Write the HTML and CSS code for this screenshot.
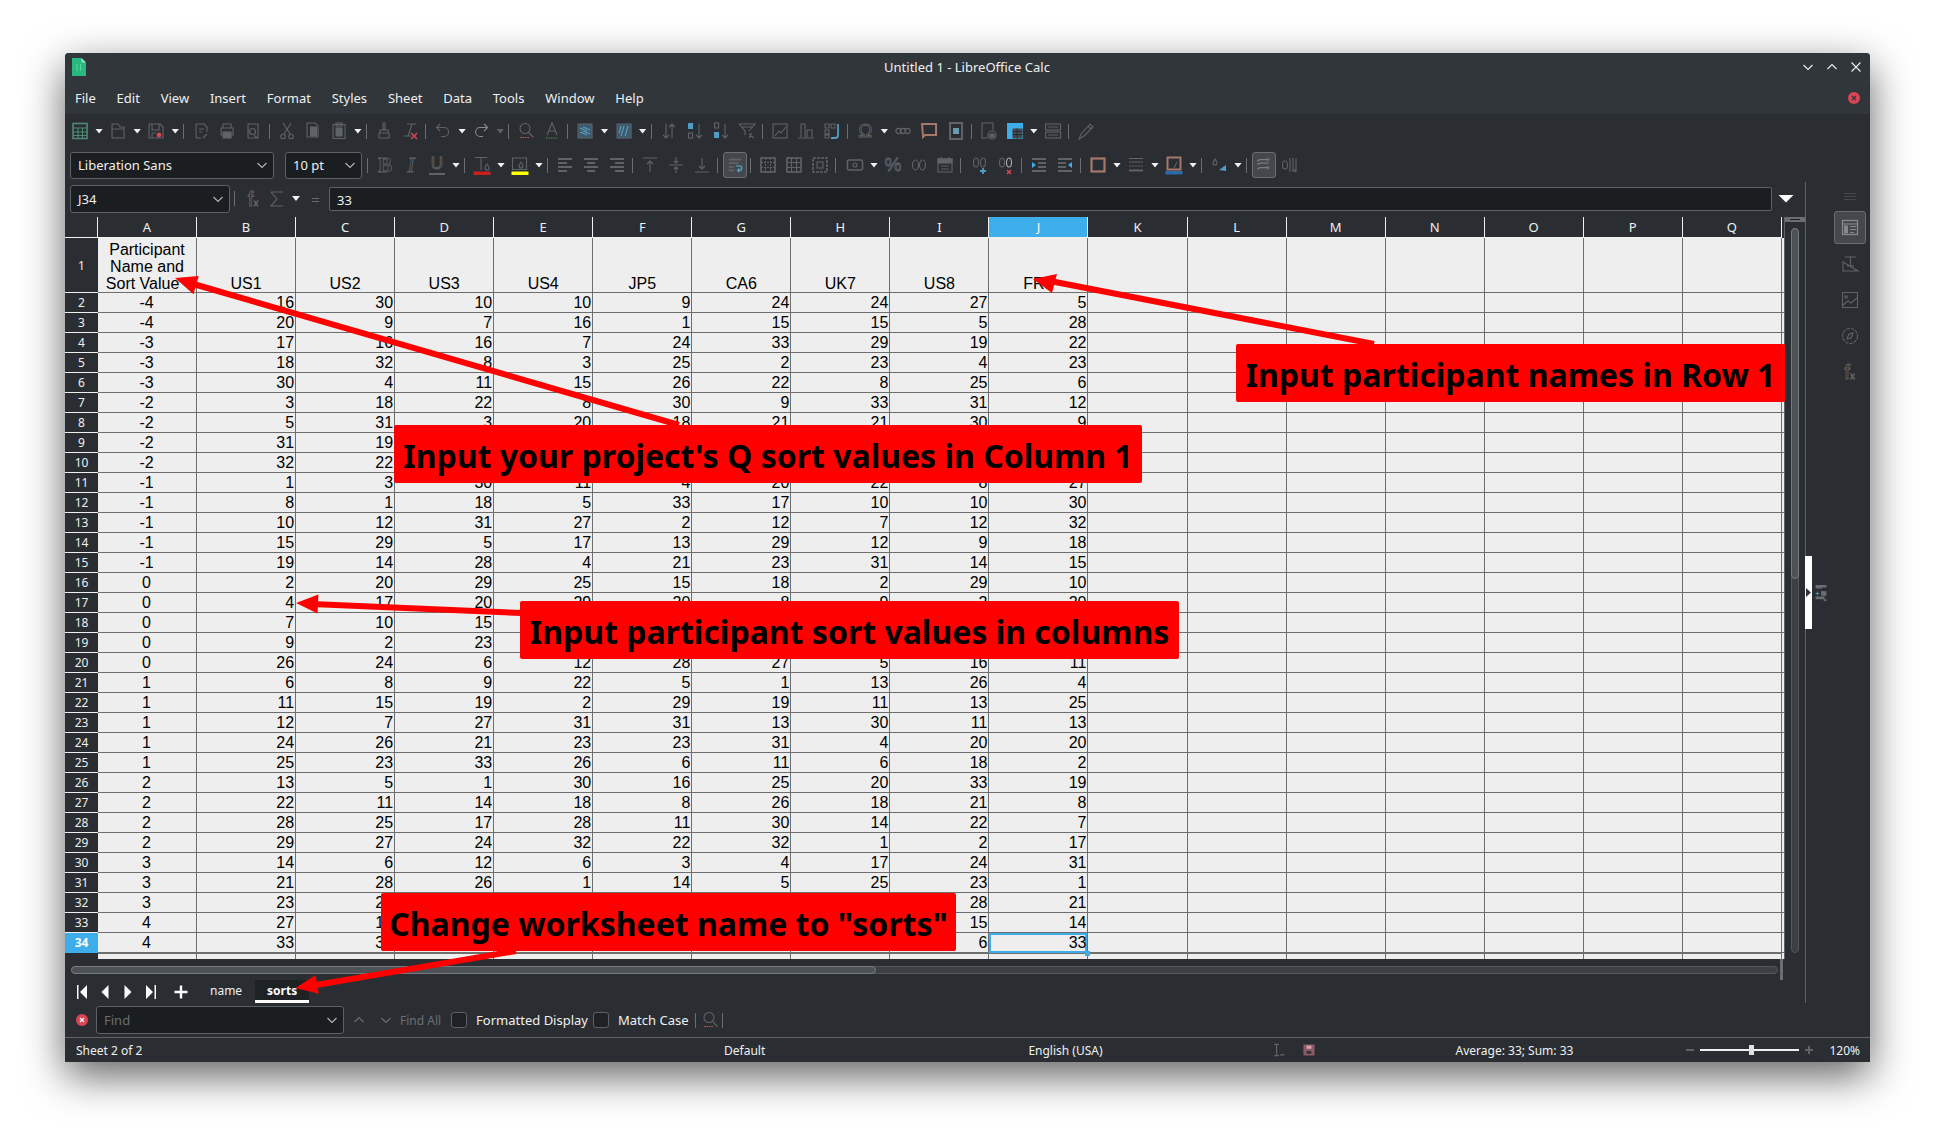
FILE: index.html
```html
<!DOCTYPE html>
<html lang="en">
<head>
  <meta charset="UTF-8">
  <title>Untitled 1 - LibreOffice Calc</title>
  <link rel="stylesheet" href="styles.css">
</head>
<body>
  <svg class="defs" aria-hidden="true">
    <symbol id="calc" viewBox="0 0 20 20"><rect x="3" y="2.500" width="14" height="15" stroke="#4d8a74" stroke-width="1.600"/><path d="M3 7h14M3 11h14M3 14.500h14M8 7v10M12.500 7v10" stroke="#4d8a74"/></symbol>
    <symbol id="open" viewBox="0 0 20 20"><path d="M4 17V3h6l2 3h4v11zM4 8h12"/></symbol>
    <symbol id="save" viewBox="0 0 20 20"><path d="M3 3h11l3 3v11H3zM6 3v6h7V3M6 17v-5h4"/><circle cx="13" cy="14" r="2.400" fill="#da4453" stroke="none"/></symbol>
    <symbol id="doc" viewBox="0 0 20 20"><path d="M5 17V3h8l3 3v5M5 17h5M12 17l4-4M8 8h5M8 11h3"/></symbol>
    <symbol id="print" viewBox="0 0 20 20"><path d="M6 7V3h8v4M4 7h12v7H4z"/><rect x="6" y="11" width="8" height="6" fill="#5f6367"/></symbol>
    <symbol id="preview" viewBox="0 0 20 20"><path d="M5 17V3h10v14zM11 14l3 3"/><circle cx="9.500" cy="10.500" r="3"/></symbol>
    <symbol id="cut" viewBox="0 0 20 20"><path d="M6 2l7 11M14 2l-7 11"/><circle cx="6" cy="15.500" r="2.300"/><circle cx="14" cy="15.500" r="2.300"/></symbol>
    <symbol id="copy" viewBox="0 0 20 20"><path d="M4 16V2h8l3 3v11z"/><rect x="7.500" y="6" width="6" height="9" fill="#5f6367"/></symbol>
    <symbol id="paste" viewBox="0 0 20 20"><rect x="4" y="3.500" width="12" height="14"/><rect x="7" y="2" width="6" height="3"/><rect x="7" y="7" width="6" height="8" fill="#5f6367"/></symbol>
    <symbol id="brush" viewBox="0 0 20 20"><path d="M9 2h2v6H9zM6 9h8v3H6zM5 12h10v5H5z"/></symbol>
    <symbol id="clear" viewBox="0 0 20 20"><path d="M7 3h9M12 3L8 15M4 15h7"/><path d="M11 12l6 6M17 12l-6 6" stroke="#da4453" stroke-width="1.500"/></symbol>
    <symbol id="undo" viewBox="0 0 20 20"><path d="M7 3L3.500 6.500 7 10M4 6.500h7a4.500 4.500 0 0 1 0 9H8"/></symbol>
    <symbol id="redo" viewBox="0 0 20 20"><path d="M13 3l3.500 3.500L13 10M16 6.500H9a4.500 4.500 0 0 0 0 9h3" stroke="#85898d"/></symbol>
    <symbol id="find" viewBox="0 0 20 20"><circle cx="9" cy="7.500" r="5"/><path d="M12.500 11.500l5 5"/><path d="M4 16.500h9" stroke="#b5654e" stroke-dasharray="1.500 1"/></symbol>
    <symbol id="spell" viewBox="0 0 20 20"><path d="M5 14L10 2l5 12M7 10h6"/><path d="M4 17h12" stroke="#4d8a5c" stroke-dasharray="1.500 1"/></symbol>
    <symbol id="rowfill" viewBox="0 0 20 20"><rect x="3" y="3" width="14" height="14" fill="#3a5a6e"/><path d="M5 7l7 3M8 6l7 3M5 11l7 3M8 10l7 3" stroke="#5f9dbd"/></symbol>
    <symbol id="colfill" viewBox="0 0 20 20"><rect x="3" y="3" width="14" height="14" fill="#3a5a6e"/><path d="M7 15l3-10M11 15l3-10M5 12l2-7" stroke="#5f9dbd"/></symbol>
    <symbol id="sort" viewBox="0 0 20 20"><path d="M7 3v14M4 14l3 3 3-3M13 17V3M10 6l3-3 3 3"/></symbol>
    <symbol id="asc" viewBox="0 0 20 20"><rect x="3" y="2" width="5" height="6" fill="#4f9cc4" stroke="none"/><rect x="3.500" y="12" width="4" height="5"/><path d="M14 3v14M11 14l3 3 3-3"/></symbol>
    <symbol id="desc" viewBox="0 0 20 20"><rect x="3.500" y="2" width="4" height="5"/><rect x="3" y="11" width="5" height="6" fill="#4f9cc4" stroke="none"/><path d="M14 3v14M11 14l3 3 3-3"/></symbol>
    <symbol id="filter" viewBox="0 0 20 20"><path d="M2 3h16l-6 7M2 3l6 7v4M4 6h12M12 13l5 4M15 12l-3 5"/></symbol>
    <symbol id="chart" viewBox="0 0 20 20"><rect x="3" y="3" width="14" height="14"/><path d="M5 15l4-5 2 2 5-6"/></symbol>
    <symbol id="bars" viewBox="0 0 20 20"><path d="M5 16V3h4v13M11 16V9h5v7M2 17h16"/></symbol>
    <symbol id="cross" viewBox="0 0 20 20"><path d="M3 3h4v4H3zM9 3h4v4H9zM3 9h4v4H3zM3 14h4v3H3z"/><path d="M16 3v11a3 3 0 0 1-3 3h-4" stroke="#4f9cc4" stroke-width="1.800"/></symbol>
    <symbol id="link" viewBox="0 0 20 20"><circle cx="5.500" cy="10" r="2.600"/><circle cx="10" cy="10" r="2.600"/><circle cx="14.500" cy="10" r="2.600"/></symbol>
    <symbol id="comment" viewBox="0 0 20 20"><path d="M3 3h14v11H6l-2 2z" stroke="#a6776a" stroke-width="2"/></symbol>
    <symbol id="header" viewBox="0 0 20 20"><rect x="4" y="2" width="12" height="16" stroke-width="2"/><rect x="7" y="7" width="6" height="6" fill="#6b9ab5" stroke="none"/></symbol>
    <symbol id="form" viewBox="0 0 20 20"><path d="M9 17H3V2h11v7"/><circle cx="13" cy="14" r="4"/><rect x="11" y="13" width="4" height="3" fill="#5f6367"/></symbol>
    <symbol id="named" viewBox="0 0 20 20"><rect x="2" y="2" width="16" height="16" fill="#3daee9" stroke="none"/><rect x="7.500" y="7.500" width="10" height="10" fill="#45494d" stroke="none"/><path d="M7.500 10.500h10M7.500 13.500h10M12 7.500v10" stroke="#2a2e32"/></symbol>
    <symbol id="rows" viewBox="0 0 20 20"><rect x="2.500" y="3" width="15" height="6"/><rect x="2.500" y="11" width="15" height="6"/><path d="M5 6h10M5 14h10"/></symbol>
    <symbol id="pen" viewBox="0 0 20 20"><path d="M3 18l2-5 9-10 3 3-9 9zM12 5l3 3"/></symbol>

    <symbol id="fcolor" viewBox="0 0 20 20"><path d="M3 2.500h12M9 2.500V15M15 9c-1.500 2-2 3-2 4a2 2 0 0 0 4 0c0-1-.5-2-2-4z"/><rect x="1.500" y="16.500" width="17" height="3.500" fill="#c8201e" stroke="none"/></symbol>
    <symbol id="hilite" viewBox="0 0 20 20"><path d="M2.500 14.500V3h14v11.500zM11 7c-1.500 2-2 3-2 4a2 2 0 0 0 4 0c0-1-.5-2-2-4z"/><rect x="1.500" y="16.500" width="17" height="3.500" fill="#ffff00" stroke="none"/></symbol>
    <symbol id="aleft" viewBox="0 0 20 20"><path d="M3 4h14M3 8h9M3 12h14M3 16h9" stroke-width="2"/></symbol>
    <symbol id="acenter" viewBox="0 0 20 20"><path d="M3 4h14M6 8h8M3 12h14M6 16h8" stroke-width="2"/></symbol>
    <symbol id="aright" viewBox="0 0 20 20"><path d="M3 4h14M8 8h9M3 12h14M8 16h9" stroke-width="2"/></symbol>
    <symbol id="vtop" viewBox="0 0 20 20"><path d="M3 3h14M10 17V6M7 9l3-3 3 3"/></symbol>
    <symbol id="vmid" viewBox="0 0 20 20"><path d="M3 10h14M10 2v6M8 6l2 2 2-2M10 18v-6M8 14l2-2 2 2"/></symbol>
    <symbol id="vbot" viewBox="0 0 20 20"><path d="M3 17h14M10 3v11M7 11l3 3 3-3"/></symbol>
    <symbol id="wrap" viewBox="0 0 20 20"><path d="M3 4h14M3 8h11M3 12h6M3 16h6" stroke-width="2"/><path d="M13 16h2a2.500 2.500 0 0 0 0-5h-4M15 18l-2-2 2-2" stroke="#4f9cc4" stroke-width="1.500"/></symbol>
    <symbol id="merge" viewBox="0 0 20 20"><rect x="3" y="3" width="14" height="14" stroke-width="1.600"/><path d="M3 7.500h14M3 12.500h14M7.500 3v14M12.500 3v14" stroke-dasharray="2 1"/></symbol>
    <symbol id="split" viewBox="0 0 20 20"><rect x="3" y="3" width="14" height="14" stroke-width="1.600"/><path d="M3 7.500h14M7.500 3v14M12.500 3v14M3 12.500h14"/></symbol>
    <symbol id="unmerge" viewBox="0 0 20 20"><rect x="3" y="3" width="14" height="14" stroke-width="1.600" stroke-dasharray="3 1"/><rect x="7" y="7" width="6" height="6"/></symbol>
    <symbol id="numfmt" viewBox="0 0 20 20"><rect x="2.500" y="5" width="15" height="10" rx="1.500" stroke-width="1.500"/><circle cx="10" cy="10" r="2"/></symbol>
    <symbol id="zeros" viewBox="0 0 20 20"><ellipse cx="6.500" cy="10" rx="3" ry="5"/><ellipse cx="13.500" cy="10" rx="3" ry="5"/></symbol>
    <symbol id="date" viewBox="0 0 20 20"><rect x="3" y="4" width="14" height="13"/><rect x="3" y="4" width="14" height="4" fill="#5f6367"/><path d="M6 2v3M14 2v3M6 11h8M6 14h8"/></symbol>
    <symbol id="decadd" viewBox="0 0 20 20"><ellipse cx="6" cy="7.500" rx="2.500" ry="4.500"/><ellipse cx="13" cy="7.500" rx="2.500" ry="4.500"/><path d="M13 13v6M10 16h6" stroke="#4f9cc4" stroke-width="1.800"/></symbol>
    <symbol id="decdel" viewBox="0 0 20 20"><ellipse cx="6" cy="7.500" rx="2.500" ry="4.500"/><ellipse cx="13" cy="7.500" rx="2.500" ry="4.500" stroke="#a8acb0"/><path d="M11 15l4 4M15 15l-4 4" stroke="#da4453" stroke-width="1.500"/></symbol>
    <symbol id="indent" viewBox="0 0 20 20"><path d="M3 4h14M9 8h8M9 12h8M3 16h14" stroke-width="2.200"/><path d="M3 7l4 3-4 3z" fill="#3daee9" stroke="none"/></symbol>
    <symbol id="outdent" viewBox="0 0 20 20"><path d="M3 4h14M3 8h8M3 12h8M3 16h14" stroke-width="2.200"/><path d="M17 7l-4 3 4 3z" fill="#3daee9" stroke="none"/></symbol>
    <symbol id="border" viewBox="0 0 20 20"><rect x="3.500" y="3.500" width="13" height="13" stroke="#a6776a" stroke-width="2.200"/></symbol>
    <symbol id="bstyle" viewBox="0 0 20 20"><path d="M3 3.500h14M3 7h14"/><path d="M3 11h14" stroke-dasharray="2 1"/><path d="M3 15.500h14" stroke-width="2"/></symbol>
    <symbol id="bcolor" viewBox="0 0 20 20"><rect x="3.500" y="2.500" width="13" height="12" stroke="#a6776a" stroke-width="2"/><path d="M10 13l3-6"/><rect x="1.500" y="16" width="17" height="3.500" fill="#2a6aa8" stroke="none"/></symbol>
    <symbol id="cond" viewBox="0 0 20 20"><path d="M6 4C5 6 4 7 4 8a2 2 0 0 0 4 0c0-1-1-2-2-4z"/><path d="M10 15l7-5v6z" fill="#4f9cc4" stroke="none"/></symbol>
    <symbol id="rows2" viewBox="0 0 20 20"><path d="M3 6c0-2 2-2 4-2h7M3 10c0-2 2-2 4-2h8M3 15c0-2 2-2 4-2h7" stroke-width="1.400" stroke="#7a7e82"/><path d="M13 2l3 2-3 2M13 11l3 2-3 2" stroke="#7a7e82"/></symbol>
    <symbol id="ltr" viewBox="0 0 20 20"><ellipse cx="5" cy="10" rx="2.500" ry="4"/><path d="M10 3v14M13 3v14M16 3v14M16 17l-3-3"/></symbol>

    <symbol id="sum" viewBox="0 0 20 20"><path d="M4 3h12M4 3l6 7-6 7h12"/></symbol>
    <symbol id="pane" viewBox="0 0 20 20"><rect x="2.500" y="3" width="15" height="14" stroke="#85898d" stroke-width="1.300"/><path d="M2.500 6.500h15" stroke="#85898d"/><rect x="4" y="8" width="4" height="8" fill="#85898d" stroke="none"/><path d="M10 9h6M10 12h6M10 15h4" stroke="#85898d"/></symbol>
    <symbol id="tstyle" viewBox="0 0 20 20"><path d="M5 3h11M10.500 3v9M7 12h7M3 8v9h15z"/></symbol>
    <symbol id="image" viewBox="0 0 20 20"><rect x="2.500" y="2.500" width="15" height="15"/><path d="M3 15l5-4 3 2 6-5M5 6h2v2H5z"/></symbol>
    <symbol id="compass" viewBox="0 0 20 20"><circle cx="10" cy="10" r="7.500" stroke-dasharray="3.500 1"/><path d="M7 13l2-5 4-1-2 5z"/></symbol>
    <symbol id="chevd" viewBox="0 0 12 12"><path d="M1.500 4l4.500 4.500L10.500 4"/></symbol>
    <symbol id="chevu" viewBox="0 0 12 12"><path d="M1.500 8L6 3.500 10.500 8"/></symbol>
    <symbol id="x" viewBox="0 0 12 12"><path d="M1.500 1.500l9 9M10.500 1.500l-9 9"/></symbol>
    <symbol id="stop" viewBox="0 0 12 12"><circle cx="6" cy="6" r="6" fill="#da4453" stroke="none"/><path d="M4 4l4 4M8 4L4 8" stroke="#31363b" stroke-width="1.200"/></symbol>
    <symbol id="stopw" viewBox="0 0 12 12"><circle cx="6" cy="6" r="6" fill="#da4453" stroke="none"/><path d="M4 4l4 4M8 4L4 8" stroke="#fcfcfc" stroke-width="1.200"/></symbol>
    <symbol id="first" viewBox="0 0 14 16"><path d="M2 1v14h1.500V1zM12 1v14L5 8z" fill="#fcfcfc" stroke="none"/></symbol>
    <symbol id="prev" viewBox="0 0 14 16"><path d="M10.500 1v14L3.500 8z" fill="#fcfcfc" stroke="none"/></symbol>
    <symbol id="next" viewBox="0 0 14 16"><path d="M3.500 1v14l7-7z" fill="#fcfcfc" stroke="none"/></symbol>
    <symbol id="last" viewBox="0 0 14 16"><path d="M2 1v14l7-7zM10.500 1v14H12V1z" fill="#fcfcfc" stroke="none"/></symbol>
    <symbol id="plus" viewBox="0 0 16 16"><path d="M8 1.500v13M1.500 8h13" stroke="#fcfcfc" stroke-width="2.400"/></symbol>
    <symbol id="cursor" viewBox="0 0 20 20"><path d="M4 3h6M7 3v14M4 17h6M11 16h6" stroke-width="1.600"/></symbol>
    <symbol id="floppy" viewBox="0 0 20 20"><rect x="3" y="3" width="14" height="14" rx="1" fill="#8a5a66" stroke="none"/><rect x="7" y="4.500" width="6" height="4" fill="#d9a0ae" stroke="none"/><rect x="7" y="11.500" width="6" height="3" fill="#2a2e32" stroke="none"/></symbol>
    <symbol id="grip" viewBox="0 0 14 20"><path d="M1 1h12v3H8v1H1zM1 14h10v3h2v2h-3v-2H1z" fill="#6a6e72" stroke="none"/><path d="M7 8h6v5H7z" fill="#6a6e72" stroke="none"/><path d="M1 10.500h4M3 8.500v4" stroke="#4f9cc4"/></symbol>
  </svg>

  <div class="window">
    <div class="titlebar">
      <svg class="appicon" viewBox="0 0 14 18"><path d="M0 0h9.500L14 4.500V18H0z" fill="#27b97f"/><path d="M9.500 0L14 4.500H9.500z" fill="#8fe3c0"/><path d="M5 6v7M8.500 6v7" stroke="#5bd3a2"/></svg>
      <span class="title">Untitled 1 - LibreOffice Calc</span>
      <span class="winctl">
        <svg class="mini white"><use href="#chevd"/></svg>
        <svg class="mini white"><use href="#chevu"/></svg>
        <svg class="mini white"><use href="#x"/></svg>
      </span>
    </div>

    <div class="menubar">
      <span>File</span><span>Edit</span><span>View</span><span>Insert</span><span>Format</span><span>Styles</span><span>Sheet</span><span>Data</span><span>Tools</span><span>Window</span><span>Help</span>
      <svg class="docclose"><use href="#stop"/></svg>
    </div>

    <div class="toolbar first-bar">
      <svg class="ic"><use href="#calc"/></svg><b class="dd"></b>
      <svg class="ic"><use href="#open"/></svg><b class="dd"></b>
      <svg class="ic"><use href="#save"/></svg><b class="dd"></b><b class="sep"></b>
      <svg class="ic"><use href="#doc"/></svg>
      <svg class="ic"><use href="#print"/></svg>
      <svg class="ic"><use href="#preview"/></svg><b class="sep"></b>
      <svg class="ic"><use href="#cut"/></svg>
      <svg class="ic"><use href="#copy"/></svg>
      <svg class="ic"><use href="#paste"/></svg><b class="dd"></b><b class="sep"></b>
      <svg class="ic"><use href="#brush"/></svg>
      <svg class="ic"><use href="#clear"/></svg><b class="sep"></b>
      <svg class="ic"><use href="#undo"/></svg><b class="dd"></b>
      <svg class="ic"><use href="#redo"/></svg><b class="dd dim"></b><b class="sep"></b>
      <svg class="ic"><use href="#find"/></svg>
      <svg class="ic"><use href="#spell"/></svg><b class="sep"></b>
      <svg class="ic"><use href="#rowfill"/></svg><b class="dd"></b>
      <svg class="ic"><use href="#colfill"/></svg><b class="dd"></b><b class="sep"></b>
      <svg class="ic"><use href="#sort"/></svg>
      <svg class="ic"><use href="#asc"/></svg>
      <svg class="ic"><use href="#desc"/></svg>
      <svg class="ic"><use href="#filter"/></svg><b class="sep"></b>
      <svg class="ic"><use href="#chart"/></svg>
      <svg class="ic"><use href="#bars"/></svg>
      <svg class="ic"><use href="#cross"/></svg><b class="sep"></b>
      <span class="tg sans">Ω</span><b class="dd"></b>
      <svg class="ic"><use href="#link"/></svg>
      <svg class="ic"><use href="#comment"/></svg>
      <svg class="ic"><use href="#header"/></svg><b class="sep"></b>
      <svg class="ic"><use href="#form"/></svg>
      <svg class="ic"><use href="#named"/></svg><b class="dd"></b>
      <svg class="ic"><use href="#rows"/></svg><b class="sep"></b>
      <svg class="ic"><use href="#pen"/></svg>
    </div>

    <div class="toolbar second-bar">
      <span class="combo fontbox">Liberation Sans<svg class="mini"><use href="#chevd"/></svg></span>
      <span class="combo sizebox">10 pt<svg class="mini"><use href="#chevd"/></svg></span><b class="sep"></b>
      <span class="tg serif strong">B</span>
      <span class="tg serif slanted">I</span>
      <span class="tg sans underlined">U</span><b class="dd"></b><b class="sep"></b>
      <svg class="ic"><use href="#fcolor"/></svg><b class="dd"></b>
      <svg class="ic"><use href="#hilite"/></svg><b class="dd"></b><b class="sep"></b>
      <svg class="ic"><use href="#aleft"/></svg>
      <svg class="ic"><use href="#acenter"/></svg>
      <svg class="ic"><use href="#aright"/></svg><b class="sep"></b>
      <svg class="ic"><use href="#vtop"/></svg>
      <svg class="ic"><use href="#vmid"/></svg>
      <svg class="ic"><use href="#vbot"/></svg><b class="sep"></b>
      <svg class="ic on"><use href="#wrap"/></svg><b class="sep"></b>
      <svg class="ic"><use href="#merge"/></svg>
      <svg class="ic"><use href="#split"/></svg>
      <svg class="ic"><use href="#unmerge"/></svg><b class="sep wide"></b>
      <svg class="ic"><use href="#numfmt"/></svg><b class="dd"></b>
      <span class="tg sans">%</span>
      <svg class="ic"><use href="#zeros"/></svg>
      <svg class="ic"><use href="#date"/></svg><b class="sep wide"></b>
      <svg class="ic"><use href="#decadd"/></svg>
      <svg class="ic"><use href="#decdel"/></svg><b class="sep"></b>
      <svg class="ic"><use href="#indent"/></svg>
      <svg class="ic"><use href="#outdent"/></svg><b class="sep"></b>
      <svg class="ic"><use href="#border"/></svg><b class="dd"></b>
      <svg class="ic"><use href="#bstyle"/></svg><b class="dd"></b>
      <svg class="ic"><use href="#bcolor"/></svg><b class="dd"></b><b class="sep"></b>
      <svg class="ic"><use href="#cond"/></svg><b class="dd"></b><b class="sep"></b>
      <svg class="ic on"><use href="#rows2"/></svg>
      <svg class="ic"><use href="#ltr"/></svg>
    </div>

    <div class="middle">
      <div class="workarea">
        <div class="formulabar">
          <span class="combo namebox">J34<svg class="mini"><use href="#chevd"/></svg></span><b class="sep"></b>
          <span class="tg sans fx">f<small>x</small></span>
          <svg class="ic sigma"><use href="#sum"/></svg><b class="dd"></b>
          <span class="equals">=</span>
          <span class="formula">33</span>
          <b class="bigdrop"></b>
        </div>

        <div class="sheetarea">
          <div class="sheet">
            <div class="row colhead"><span></span><span>A</span><span>B</span><span>C</span><span>D</span><span>E</span><span>F</span><span>G</span><span>H</span><span>I</span><span class="active">J</span><span>K</span><span>L</span><span>M</span><span>N</span><span>O</span><span>P</span><span>Q</span></div>
            <div class="row labels"><span class="rh">1</span><span>Participant Name and Sort Value&nbsp;&nbsp;</span><span>US1</span><span>US2</span><span>US3</span><span>US4</span><span>JP5</span><span>CA6</span><span>UK7</span><span>US8</span><span>FR9</span><span></span><span></span><span></span><span></span><span></span><span></span><span></span></div>
            <div class="row"><span class="rh">2</span><span>-4</span><span>16</span><span>30</span><span>10</span><span>10</span><span>9</span><span>24</span><span>24</span><span>27</span><span>5</span><span></span><span></span><span></span><span></span><span></span><span></span><span></span></div>
            <div class="row"><span class="rh">3</span><span>-4</span><span>20</span><span>9</span><span>7</span><span>16</span><span>1</span><span>15</span><span>15</span><span>5</span><span>28</span><span></span><span></span><span></span><span></span><span></span><span></span><span></span></div>
            <div class="row"><span class="rh">4</span><span>-3</span><span>17</span><span>16</span><span>16</span><span>7</span><span>24</span><span>33</span><span>29</span><span>19</span><span>22</span><span></span><span></span><span></span><span></span><span></span><span></span><span></span></div>
            <div class="row"><span class="rh">5</span><span>-3</span><span>18</span><span>32</span><span>8</span><span>3</span><span>25</span><span>2</span><span>23</span><span>4</span><span>23</span><span></span><span></span><span></span><span></span><span></span><span></span><span></span></div>
            <div class="row"><span class="rh">6</span><span>-3</span><span>30</span><span>4</span><span>11</span><span>15</span><span>26</span><span>22</span><span>8</span><span>25</span><span>6</span><span></span><span></span><span></span><span></span><span></span><span></span><span></span></div>
            <div class="row"><span class="rh">7</span><span>-2</span><span>3</span><span>18</span><span>22</span><span>8</span><span>30</span><span>9</span><span>33</span><span>31</span><span>12</span><span></span><span></span><span></span><span></span><span></span><span></span><span></span></div>
            <div class="row"><span class="rh">8</span><span>-2</span><span>5</span><span>31</span><span>3</span><span>20</span><span>18</span><span>21</span><span>21</span><span>30</span><span>9</span><span></span><span></span><span></span><span></span><span></span><span></span><span></span></div>
            <div class="row"><span class="rh">9</span><span>-2</span><span>31</span><span>19</span><span></span><span></span><span></span><span></span><span></span><span></span><span></span><span></span><span></span><span></span><span></span><span></span><span></span><span></span></div>
            <div class="row"><span class="rh">10</span><span>-2</span><span>32</span><span>22</span><span></span><span></span><span></span><span></span><span></span><span></span><span></span><span></span><span></span><span></span><span></span><span></span><span></span><span></span></div>
            <div class="row"><span class="rh">11</span><span>-1</span><span>1</span><span>3</span><span>30</span><span>11</span><span>4</span><span>20</span><span>22</span><span>8</span><span>27</span><span></span><span></span><span></span><span></span><span></span><span></span><span></span></div>
            <div class="row"><span class="rh">12</span><span>-1</span><span>8</span><span>1</span><span>18</span><span>5</span><span>33</span><span>17</span><span>10</span><span>10</span><span>30</span><span></span><span></span><span></span><span></span><span></span><span></span><span></span></div>
            <div class="row"><span class="rh">13</span><span>-1</span><span>10</span><span>12</span><span>31</span><span>27</span><span>2</span><span>12</span><span>7</span><span>12</span><span>32</span><span></span><span></span><span></span><span></span><span></span><span></span><span></span></div>
            <div class="row"><span class="rh">14</span><span>-1</span><span>15</span><span>29</span><span>5</span><span>17</span><span>13</span><span>29</span><span>12</span><span>9</span><span>18</span><span></span><span></span><span></span><span></span><span></span><span></span><span></span></div>
            <div class="row"><span class="rh">15</span><span>-1</span><span>19</span><span>14</span><span>28</span><span>4</span><span>21</span><span>23</span><span>31</span><span>14</span><span>15</span><span></span><span></span><span></span><span></span><span></span><span></span><span></span></div>
            <div class="row"><span class="rh">16</span><span>0</span><span>2</span><span>20</span><span>29</span><span>25</span><span>15</span><span>18</span><span>2</span><span>29</span><span>10</span><span></span><span></span><span></span><span></span><span></span><span></span><span></span></div>
            <div class="row"><span class="rh">17</span><span>0</span><span>4</span><span>17</span><span>20</span><span>29</span><span>20</span><span>8</span><span>9</span><span>2</span><span>20</span><span></span><span></span><span></span><span></span><span></span><span></span><span></span></div>
            <div class="row"><span class="rh">18</span><span>0</span><span>7</span><span>10</span><span>15</span><span></span><span></span><span></span><span></span><span></span><span></span><span></span><span></span><span></span><span></span><span></span><span></span><span></span></div>
            <div class="row"><span class="rh">19</span><span>0</span><span>9</span><span>2</span><span>23</span><span></span><span></span><span></span><span></span><span></span><span></span><span></span><span></span><span></span><span></span><span></span><span></span><span></span></div>
            <div class="row"><span class="rh">20</span><span>0</span><span>26</span><span>24</span><span>6</span><span>12</span><span>28</span><span>27</span><span>5</span><span>16</span><span>11</span><span></span><span></span><span></span><span></span><span></span><span></span><span></span></div>
            <div class="row"><span class="rh">21</span><span>1</span><span>6</span><span>8</span><span>9</span><span>22</span><span>5</span><span>1</span><span>13</span><span>26</span><span>4</span><span></span><span></span><span></span><span></span><span></span><span></span><span></span></div>
            <div class="row"><span class="rh">22</span><span>1</span><span>11</span><span>15</span><span>19</span><span>2</span><span>29</span><span>19</span><span>11</span><span>13</span><span>25</span><span></span><span></span><span></span><span></span><span></span><span></span><span></span></div>
            <div class="row"><span class="rh">23</span><span>1</span><span>12</span><span>7</span><span>27</span><span>31</span><span>31</span><span>13</span><span>30</span><span>11</span><span>13</span><span></span><span></span><span></span><span></span><span></span><span></span><span></span></div>
            <div class="row"><span class="rh">24</span><span>1</span><span>24</span><span>26</span><span>21</span><span>23</span><span>23</span><span>31</span><span>4</span><span>20</span><span>20</span><span></span><span></span><span></span><span></span><span></span><span></span><span></span></div>
            <div class="row"><span class="rh">25</span><span>1</span><span>25</span><span>23</span><span>33</span><span>26</span><span>6</span><span>11</span><span>6</span><span>18</span><span>2</span><span></span><span></span><span></span><span></span><span></span><span></span><span></span></div>
            <div class="row"><span class="rh">26</span><span>2</span><span>13</span><span>5</span><span>1</span><span>30</span><span>16</span><span>25</span><span>20</span><span>33</span><span>19</span><span></span><span></span><span></span><span></span><span></span><span></span><span></span></div>
            <div class="row"><span class="rh">27</span><span>2</span><span>22</span><span>11</span><span>14</span><span>18</span><span>8</span><span>26</span><span>18</span><span>21</span><span>8</span><span></span><span></span><span></span><span></span><span></span><span></span><span></span></div>
            <div class="row"><span class="rh">28</span><span>2</span><span>28</span><span>25</span><span>17</span><span>28</span><span>11</span><span>30</span><span>14</span><span>22</span><span>7</span><span></span><span></span><span></span><span></span><span></span><span></span><span></span></div>
            <div class="row"><span class="rh">29</span><span>2</span><span>29</span><span>27</span><span>24</span><span>32</span><span>22</span><span>32</span><span>1</span><span>2</span><span>17</span><span></span><span></span><span></span><span></span><span></span><span></span><span></span></div>
            <div class="row"><span class="rh">30</span><span>3</span><span>14</span><span>6</span><span>12</span><span>6</span><span>3</span><span>4</span><span>17</span><span>24</span><span>31</span><span></span><span></span><span></span><span></span><span></span><span></span><span></span></div>
            <div class="row"><span class="rh">31</span><span>3</span><span>21</span><span>28</span><span>26</span><span>1</span><span>14</span><span>5</span><span>25</span><span>23</span><span>1</span><span></span><span></span><span></span><span></span><span></span><span></span><span></span></div>
            <div class="row"><span class="rh">32</span><span>3</span><span>23</span><span>21</span><span></span><span></span><span></span><span></span><span></span><span>28</span><span>21</span><span></span><span></span><span></span><span></span><span></span><span></span><span></span></div>
            <div class="row"><span class="rh">33</span><span>4</span><span>27</span><span>13</span><span></span><span></span><span></span><span></span><span></span><span>15</span><span>14</span><span></span><span></span><span></span><span></span><span></span><span></span><span></span></div>
            <div class="row"><span class="rh">34</span><span>4</span><span>33</span><span>33</span><span></span><span></span><span></span><span></span><span></span><span>6</span><span class="selected">33</span><span></span><span></span><span></span><span></span><span></span><span></span><span></span></div>
            <div class="row"><span class="rh"></span><span></span><span></span><span></span><span></span><span></span><span></span><span></span><span></span><span></span><span></span><span></span><span></span><span></span><span></span><span></span><span></span><span></span></div>
          </div>
          <div class="vscroll">
            <i class="splitter"></i>
            <div class="vtrack"><i class="vthumb"></i></div>
          </div>
        </div>

        <div class="hscroll">
          <div class="htrack"><i class="hthumb"></i></div>
          <i class="hsplitter"></i>
        </div>

        <div class="tabbar">
          <svg class="nav"><use href="#first"/></svg>
          <svg class="nav"><use href="#prev"/></svg>
          <svg class="nav"><use href="#next"/></svg>
          <svg class="nav"><use href="#last"/></svg>
          <svg class="addtab"><use href="#plus"/></svg>
          <span class="tab">name</span>
          <span class="tab current">sorts</span>
        </div>
      </div>

      <div class="sidebar">
        <i class="burger"></i>
        <svg class="deck on"><use href="#pane"/></svg>
        <svg class="deck"><use href="#tstyle"/></svg>
        <svg class="deck"><use href="#image"/></svg>
        <svg class="deck"><use href="#compass"/></svg>
        <span class="tg sans fx deckfx">f<small>x</small></span>
        <span class="sidehandle"><i></i></span>
        <svg class="sidegrip"><use href="#grip"/></svg>
      </div>
    </div>

    <div class="findbar">
      <svg class="findclose"><use href="#stopw"/></svg>
      <span class="combo findbox">Find<svg class="mini"><use href="#chevd"/></svg></span>
      <svg class="mini find-arrow dimmed"><use href="#chevu"/></svg>
      <svg class="mini find-arrow dimmed"><use href="#chevd"/></svg>
      <span class="findall">Find All</span>
      <i class="check"></i><span class="checklabel">Formatted Display</span>
      <i class="check"></i><span class="checklabel">Match Case</span>
      <b class="sep"></b>
      <svg class="ic narrow"><use href="#find"/></svg>
      <b class="sep"></b>
    </div>

    <div class="statusbar">
      <span class="cell-left">Sheet 2 of 2</span>
      <span></span>
      <span class="cell-left pad">Default</span>
      <span>English (USA)</span>
      <span></span>
      <svg class="st"><use href="#cursor"/></svg>
      <svg class="st"><use href="#floppy"/></svg>
      <span></span>
      <span>Average: 33; Sum: 33</span>
      <span class="zoomer">
        <i class="zm minus"></i>
        <i class="zline"><i class="zknob"></i></i>
        <i class="zm plus"></i>
        <span class="zpct">120%</span>
      </span>
    </div>
  </div>

  <!-- annotations drawn on top of the screenshot -->
  <svg class="arrows" width="1935" height="1139" viewBox="0 0 1935 1139">
    <line x1="679" y1="425" x2="190" y2="283"/>
    <polygon points="175,278 193.500,294.200 198.700,276"/>
    <line x1="1374" y1="344" x2="1050" y2="281"/>
    <polygon points="1033,279 1052,293 1057,274"/>
    <line x1="522" y1="613" x2="312" y2="604"/>
    <polygon points="296,603 317.600,613.500 318.400,594.500"/>
    <line x1="516" y1="951" x2="310" y2="986"/>
    <polygon points="295.500,988 318.800,993.700 315.600,974.900"/>
  </svg>
  <div class="note note-row">Input participant names in Row 1</div>
  <div class="note note-col">Input your project's Q sort values in Column 1</div>
  <div class="note note-sort">Input participant sort values in columns</div>
  <div class="note note-tab">Change worksheet name to "sorts"</div>
</body>
</html>
```

FILE: styles.css
```css
* {
  box-sizing: border-box;
}
body {
  margin: 0;
  padding: 53px 0 0 65px;
  background: #fff;
  font-family: "Noto Sans", sans-serif;
  font-size: 13px;
  color: #eff0f1;
  height: 1139px;
  overflow: hidden;
  position: relative;
}
.defs {
  position: absolute;
  width: 0;
  height: 0;
}
i, b {
  display: block;
  font-style: normal;
}

/* window */
.window {
  width: 1805px;
  height: 1009px;
  background: #2a2e32;
  border-radius: 4px 4px 0 0;
  box-shadow: 0 14px 42px rgba(0, 0, 0, 0.62);
}
.titlebar {
  height: 29px;
  background: #31363b;
  border-radius: 4px 4px 0 0;
  display: grid;
  grid-template-columns: 1fr auto 1fr;
  align-items: center;
  padding: 0 8px 2px 7px;
}
.appicon {
  width: 14px;
  height: 18px;
}
.winctl {
  justify-self: end;
  display: flex;
  gap: 12px;
}
.mini {
  width: 12px;
  height: 12px;
  fill: none;
  stroke: #b4b7ba;
  stroke-width: 1.1;
}
.mini.white {
  stroke: #eff0f1;
}
.menubar {
  height: 32px;
  background: #31363b;
  display: flex;
  align-items: center;
  gap: 20.8px;
  padding: 0 10px 1px;
}
.docclose {
  width: 12px;
  height: 12px;
  margin-left: auto;
}

/* toolbars */
.toolbar {
  height: 34px;
  display: flex;
  align-items: center;
}
.first-bar {
  padding-left: 2px;
}
.second-bar {
  padding-left: 5px;
}
.ic {
  width: 26px;
  height: 20px;
  flex: none;
  fill: none;
  stroke: #5f6367;
  stroke-width: 1.1;
}
.first-bar .ic, .first-bar .tg {
  width: 26.1px;
}
.ic.on {
  width: 24px;
  height: 26px;
  margin: 0 1px;
  padding: 2px;
  background: #44484d;
  border: 1px solid #6a6e72;
  border-radius: 3px;
}
.tg {
  width: 26px;
  height: 20px;
  flex: none;
  line-height: 20px;
  text-align: center;
  color: transparent;
  -webkit-text-stroke: 0.8px #5f6367;
  font-size: 19px;
}
.tg.serif {
  font-family: "Liberation Serif", serif;
}
.tg.sans {
  font-family: "Liberation Sans", sans-serif;
}
.tg.strong {
  font-weight: 700;
  font-size: 21px;
}
.tg.slanted {
  font-style: italic;
  font-size: 21px;
}
.tg.underlined {
  font-size: 17px;
  line-height: 18px;
  height: 20px;
  background: linear-gradient(#5f6367, #5f6367) center bottom / 16px 2px no-repeat;
}
.tg.fx {
  font-size: 21px;
  line-height: 19px;
}
.tg.fx small {
  font-size: 9px;
}
.dd {
  width: 12px;
  height: 5px;
  flex: none;
  background: #eff0f1;
  clip-path: polygon(2px 0, 10px 0, 6px 100%);
}
.dd.dim {
  background: #5f6367;
}
.sep {
  width: 1px;
  height: 15px;
  flex: none;
  margin: 0 4px 0 2px;
  background: #6a6e72;
}
.sep.wide {
  margin-right: 6px;
}
.combo {
  height: 27px;
  flex: none;
  display: flex;
  align-items: center;
  justify-content: space-between;
  padding: 0 5px 0 7px;
  background: #1b1e20;
  border: 1px solid #5d6165;
  border-radius: 3px;
}
.fontbox {
  width: 204px;
  margin-right: 11px;
}
.sizebox {
  width: 77px;
  margin-right: 3px;
}

/* middle part */
.middle {
  display: flex;
  height: 821px;
}
.workarea {
  width: 1741px;
  border-right: 1px solid #5f6367;
}
.formulabar {
  height: 35px;
  display: flex;
  align-items: center;
  padding: 0 0 2px 5px;
}
.namebox {
  width: 160px;
  height: 28px;
}
.formulabar .sep {
  margin: 0 5px 0 4px;
}
.sigma {
  margin-left: -2px;
}
.equals {
  width: 27px;
  text-align: center;
  color: #6a6e72;
  font-size: 15px;
}
.formula {
  width: 1443px;
  height: 24px;
  padding-left: 7px;
  line-height: 24px;
  background: #1b1e20;
  border: 1px solid #5d6165;
  border-radius: 2px;
}
.bigdrop {
  width: 16px;
  height: 8px;
  margin-left: 6px;
  background: #fcfcfc;
  clip-path: polygon(0 0, 100% 0, 50% 100%);
}
.sheetarea {
  display: flex;
  height: 742px;
}

/* grid */
.sheet {
  width: 1719px;
  overflow: hidden;
  font-family: "Liberation Sans", sans-serif;
  font-size: 16px;
  color: #000;
}
.row {
  display: grid;
  grid-template-columns: 33px repeat(17, 99.05px);
  height: 20px;
  background: #eee;
  box-shadow: inset 0 -1px #6e6e6e;
}
.row > span {
  border-right: 1px solid #6e6e6e;
  border-bottom: 1px solid #6e6e6e;
  line-height: 20px;
  text-align: right;
  padding-right: 1px;
  white-space: nowrap;
  overflow: hidden;
}
.row > span:nth-child(2) {
  text-align: center;
}
.row > .rh {
  background: #2a2e32;
  color: #eff0f1;
  font-family: "Noto Sans", sans-serif;
  font-size: 12px;
  text-align: center;
  padding-right: 0;
  border-right: 0;
  border-bottom-color: #eff0f1;
}
.row:last-child .rh {
  border-bottom: 0;
}
.row:nth-last-child(2) .rh {
  background: #3daee9;
  font-weight: 700;
  color: #fcfcfc;
}
.colhead {
  height: 21px;
  background: #2a2e32;
  box-shadow: none;
}
.row.colhead > span {
  background: #2a2e32;
  color: #eff0f1;
  font-family: "Noto Sans", sans-serif;
  font-size: 13px;
  text-align: center;
  padding-right: 0;
  border-right-color: #eff0f1;
  border-bottom-color: #eff0f1;
}
.row.colhead > .active {
  background: #3daee9;
  color: #fcfcfc;
}
.labels {
  height: 55px;
}
.row.labels > span {
  display: flex;
  align-items: flex-end;
  justify-content: center;
  text-align: center;
  white-space: normal;
  line-height: 17px;
  padding: 0;
}
.row.labels > .rh {
  align-items: center;
  border-bottom-color: #eff0f1;
}
.row > .selected {
  position: relative;
  overflow: visible;
  box-shadow: inset 0 0 0 2px #3daee9;
}
.selected::after {
  content: "";
  position: absolute;
  right: -3px;
  bottom: -3px;
  width: 5px;
  height: 5px;
  background: #3daee9;
}

/* scrollbars */
.vscroll {
  width: 21px;
  border-left: 1px solid #5f6367;
}
.splitter {
  height: 5px;
  background: #6a6e72;
  padding-top: 2px;
}
.splitter::after {
  content: "";
  display: block;
  margin: 0 auto;
  width: 10px;
  height: 1px;
  background: #1b1e20;
}
.vtrack {
  width: 8px;
  height: 725px;
  margin: 6px 0 0 6px;
  background: #3c4045;
  border: 1px solid #54585c;
  border-radius: 4px;
}
.vthumb {
  height: 351px;
  margin: -1px;
  background: #4d5256;
  border: 1px solid #777b7f;
  border-radius: 4px;
}
.hscroll {
  height: 21px;
  display: flex;
  align-items: flex-start;
  padding-left: 6px;
}
.htrack {
  width: 1707px;
  height: 8px;
  margin-top: 7px;
  background: #3c4045;
  border: 1px solid #54585c;
  border-radius: 4px;
}
.hthumb {
  width: 805px;
  height: 8px;
  margin: -1px;
  background: #4d5256;
  border: 1px solid #777b7f;
  border-radius: 4px;
}
.hsplitter {
  width: 3px;
  height: 21px;
  margin-left: 2px;
  background: #6a6e72;
}

/* sheet tabs */
.tabbar {
  height: 23px;
  display: flex;
  align-items: center;
  padding-left: 10px;
}
.nav {
  width: 14px;
  height: 16px;
  margin-right: 9px;
}
.addtab {
  width: 16px;
  height: 16px;
  margin: 0 11px 0 6px;
}
.tab {
  font-size: 12px;
  padding: 0 10px;
  line-height: 22px;
  height: 23px;
}
.tab.current {
  width: 54px;
  padding: 0;
  text-align: center;
  font-weight: 700;
  background: #1f2225;
  border-bottom: 3px solid #fcfcfc;
  color: #fcfcfc;
  margin-left: 3px;
}

/* sidebar */
.sidebar {
  flex: 1;
  position: relative;
  display: flex;
  flex-direction: column;
  align-items: center;
  padding-left: 23px;
}
.burger {
  width: 12px;
  height: 7px;
  margin-top: 11px;
  flex: none;
  border-top: 1px solid #45494d;
  border-bottom: 1px solid #45494d;
  background: linear-gradient(#45494d, #45494d) center / 100% 1px no-repeat;
}
.deck {
  width: 20px;
  height: 20px;
  margin-top: 16px;
  flex: none;
  fill: none;
  stroke: #5f6367;
  stroke-width: 1.1;
}
.deck.on {
  width: 32px;
  height: 33px;
  margin-top: 11px;
  margin-bottom: -6px;
  padding: 5px;
  background: #44484d;
  border: 1px solid #6a6e72;
  border-radius: 3px;
}
.deckfx {
  margin-top: 16px;
}
.sidehandle {
  position: absolute;
  left: -1px;
  top: 374px;
  width: 7px;
  height: 73px;
  background: #fff;
}
.sidehandle i {
  position: absolute;
  top: 32px;
  left: 1px;
  width: 5px;
  height: 9px;
  background: #31363b;
  clip-path: polygon(0 0, 100% 50%, 0 100%);
}
.sidegrip {
  position: absolute;
  left: 8px;
  top: 402px;
  width: 14px;
  height: 18px;
}

/* find bar */
.findbar {
  height: 34px;
  display: flex;
  align-items: center;
  padding-left: 11px;
}
.findclose {
  width: 12px;
  height: 12px;
  margin-right: 8px;
}
.findbox {
  width: 248px;
  height: 28px;
  color: #6a6e72;
  margin-right: 9px;
}
.find-arrow {
  margin-right: 15px;
}
.mini.dimmed {
  stroke: #6a6e72;
}
.findall {
  color: #6a6e72;
  font-size: 12px;
  margin-right: 10px;
  margin-left: -7px;
}
.check {
  width: 16px;
  height: 16px;
  background: #1f2225;
  border: 1px solid #5d6165;
  border-radius: 3px;
  margin-right: 9px;
}
.checklabel {
  margin-right: 5px;
}
.ic.narrow {
  width: 20px;
}

/* status bar */
.statusbar {
  height: 25px;
  border-top: 1px solid #5f6367;
  display: grid;
  grid-template-columns: 241px 408px 223px 257px 69px 31px 29px 30px 323px 1fr;
  align-items: center;
  justify-items: center;
  font-size: 12px;
}
.cell-left {
  justify-self: start;
  padding-left: 11px;
}
.cell-left.pad {
  padding-left: 10px;
}
.st {
  width: 16px;
  height: 16px;
  fill: none;
  stroke: #5f6367;
}
.zoomer {
  display: flex;
  align-items: center;
  justify-self: stretch;
  padding-left: 10px;
}
.zm {
  width: 8px;
  height: 8px;
  background:
    linear-gradient(#5f6367, #5f6367) center / 100% 2px no-repeat;
}
.zm.plus {
  background:
    linear-gradient(#5f6367, #5f6367) center / 100% 2px no-repeat,
    linear-gradient(#5f6367, #5f6367) center / 2px 100% no-repeat;
}
.zline {
  width: 99px;
  height: 2px;
  margin: 0 6px;
  background: #eff0f1;
  position: relative;
}
.zknob {
  position: absolute;
  left: 49px;
  top: -4px;
  width: 5px;
  height: 10px;
  background: #dfe0e1;
}
.zpct {
  margin-left: auto;
  margin-right: 10px;
}

/* annotations */
.arrows {
  position: absolute;
  left: 0;
  top: 0;
  pointer-events: none;
}
.arrows line {
  stroke: #f00;
  stroke-width: 6;
}
.arrows polygon {
  fill: #f00;
}
.note {
  position: absolute;
  height: 58px;
  padding-top: 2px;
  display: flex;
  align-items: center;
  justify-content: center;
  background: #f00;
  border-radius: 2px;
  color: #000;
  font-family: "Noto Sans", sans-serif;
  font-weight: 700;
  font-size: 32px;
  white-space: nowrap;
}
.note-row {
  left: 1236px;
  top: 344px;
  width: 549px;
}
.note-col {
  left: 394px;
  top: 425px;
  width: 748px;
}
.note-sort {
  left: 520px;
  top: 601px;
  width: 659px;
}
.note-tab {
  left: 381px;
  top: 893px;
  width: 575px;
}
```
